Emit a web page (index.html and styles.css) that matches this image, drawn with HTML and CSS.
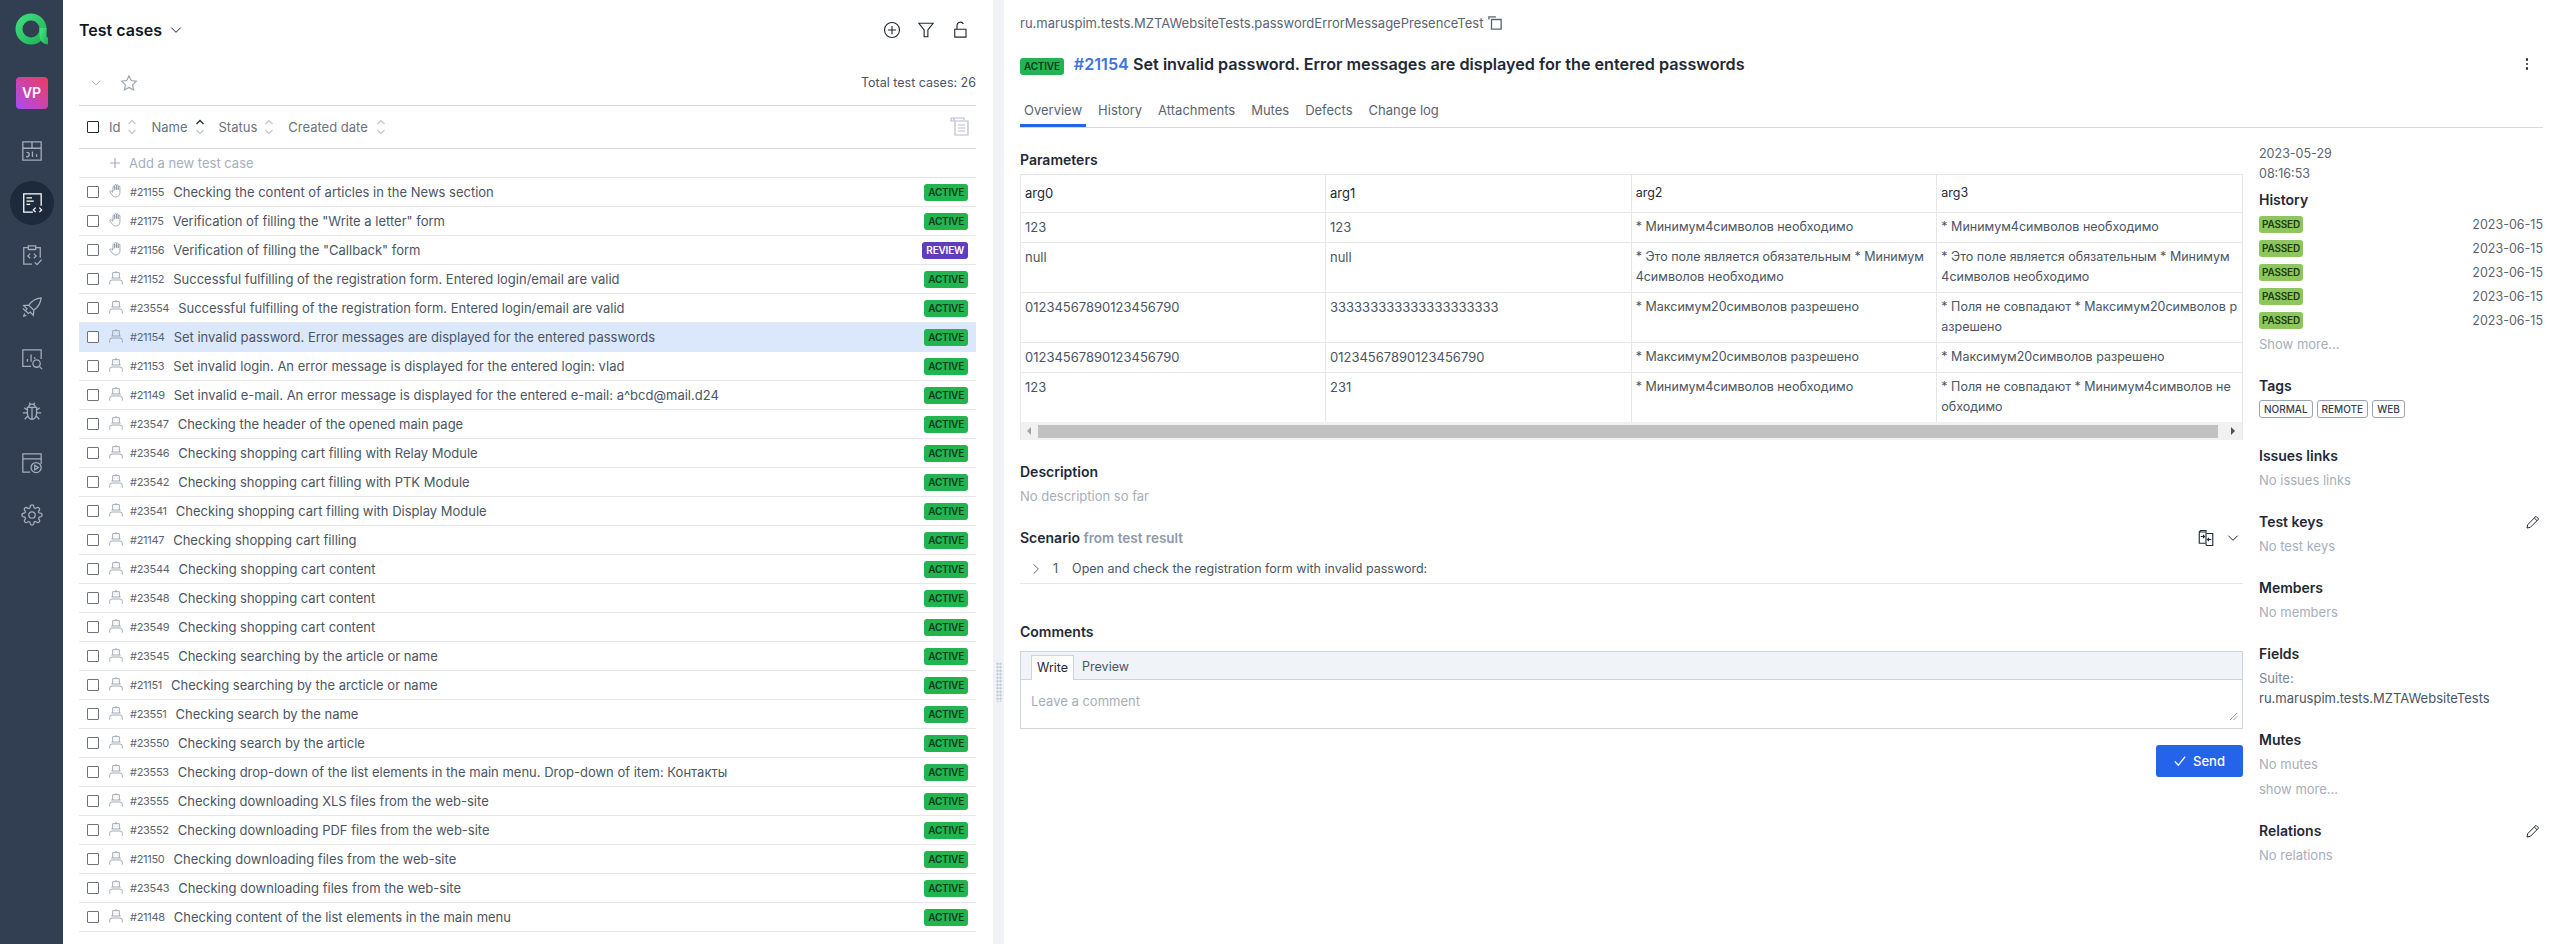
FILE: index.html
```html
<!DOCTYPE html>
<html lang="en">
<head>
  <meta charset="UTF-8" />
  <meta name="viewport" content="width=device-width, initial-scale=1.0"/>
  <title>Test cases</title>
  <link rel="stylesheet" href="styles.css">
</head>
<body>

  <!-- shared icons -->
  <svg class="sprite">
    <symbol id="i-hand" viewBox="0 0 24 24"><path d="M7.5 12V6a1.3 1.3 0 0 1 2.6 0v5M10.1 10V3.6a1.3 1.3 0 0 1 2.6 0V10M12.7 10V4.2a1.3 1.3 0 0 1 2.6 0v6.3M15.3 10.5V6a1.3 1.3 0 0 1 2.6 0v8.5c0 4-2.5 6.5-6 6.5-3 0-4.5-1.2-6-3.5l-3-4c-.8-1.2.8-2.5 2-1.5l2 1.8V11"/></symbol>
    <symbol id="i-robot" viewBox="0 0 24 24"><path d="M12 1.5V4M7 4h10v8H7zM10 8h.6M13.5 8h.6M2.5 22v-3.5A3.5 3.5 0 0 1 6 15h12a3.5 3.5 0 0 1 3.5 3.5V22M7 12H5M17 12h2"/></symbol>
    <symbol id="i-down" viewBox="0 0 24 24"><path d="M5 8.5l7 7 7-7"/></symbol>
    <symbol id="i-sort" viewBox="0 0 12 20"><path d="M2.5 7L6 3.5 9.5 7"/><path d="M2.5 13L6 16.5 9.5 13"/></symbol>
    <symbol id="i-pencil" viewBox="0 0 24 24"><path d="M16.5 3.5l4 4L8 20l-5 1 1-5zM14 6l4 4"/></symbol>
  </svg>

  <!-- Left menu -->
  <nav class="sidebar">
    <svg class="logo" viewBox="0 0 32 32">
      <defs><linearGradient id="logoGreen" x1="0" y1="0" x2="1" y2="1"><stop offset="0" stop-color="#3ddc7c"/><stop offset="1" stop-color="#22b45a"/></linearGradient></defs>
      <circle cx="15" cy="16" r="12" fill="none" stroke="url(#logoGreen)" stroke-width="7"/>
      <path d="M27 15v8c0 3 2 5 5 5" fill="none" stroke="url(#logoGreen)" stroke-width="7"/>
    </svg>
    <div class="project">VP</div>
    <svg class="nav-icon" viewBox="0 0 24 24"><path d="M2 2h20v20H2zM2 9h20M12 2v7M6 13.5c2.5 0 3 .5 3 2s-.5 3-3.5 3M12.5 12.5v6M17 15.5v3"/></svg>
    <div class="nav-active"><svg class="nav-icon" viewBox="0 0 24 24"><path d="M13 22H3V2h19v13M6 6.5h6M6 10h8M6 13.5h4M16 17l-2.5 2.5L16 22M20 17l2.5 2.5L20 22"/></svg></div>
    <svg class="nav-icon" viewBox="0 0 24 24"><path d="M8 4H3v18h9M16 4h5v11M8 2h8v4H8zM10 10.5L7.5 13l2.5 2.5M14 10.5l2.5 2.5-2.5 2.5M15 20l2.5 2.5L22.5 17"/></svg>
    <svg class="nav-icon" viewBox="0 0 24 24"><path d="M22 2c-6 .5-10 3-13.5 8L3 10.5 6.5 14 5 16l3 3 2-1.5 3.5 3.5.5-5.5c5-3.5 7.5-7.5 8-14zM2 13.5l3 3M6 21l-3 1 1-3M9 10.5l4.5 4.500"/></svg>
    <svg class="nav-icon" viewBox="0 0 24 24"><path d="M11 20H2V2h20v10M7 15v-3M11 15V7M15 12v-2"/><circle cx="17" cy="17" r="4"/><path d="M20 20l3 3"/></svg>
    <svg class="nav-icon" viewBox="0 0 24 24"><path d="M7 8h10v7a5 6 0 0 1-10 0zM8.5 8a3.5 3.5 0 0 1 7 0M12 8v13M9 3l1.5 2M15 3l-1.5 2M7 11L3.5 8.5M17 11l3.5-2.5M7 14H2M17 14h5M7.5 17.5L4 21M16.5 17.5L20 21"/></svg>
    <svg class="nav-icon" viewBox="0 0 24 24"><path d="M10 22H2V2h20v11M2 7.5h20"/><circle cx="16.5" cy="17" r="5.5"/><path d="M15 14.5v5l4-2.5z"/></svg>
    <svg class="nav-icon" viewBox="0 0 24 24"><circle cx="12" cy="12" r="3.5"/><path d="M19.4 15a1.65 1.65 0 0 0 .33 1.82l.06.06a2 2 0 0 1 0 2.83 2 2 0 0 1-2.83 0l-.06-.06a1.65 1.65 0 0 0-1.82-.33 1.65 1.65 0 0 0-1 1.51V21a2 2 0 0 1-2 2 2 2 0 0 1-2-2v-.09A1.65 1.65 0 0 0 9 19.4a1.65 1.65 0 0 0-1.82.33l-.06.06a2 2 0 0 1-2.83 0 2 2 0 0 1 0-2.83l.06-.06a1.65 1.65 0 0 0 .33-1.82 1.65 1.65 0 0 0-1.51-1H3a2 2 0 0 1-2-2 2 2 0 0 1 2-2h.09A1.65 1.65 0 0 0 4.6 9a1.65 1.65 0 0 0-.33-1.82l-.06-.06a2 2 0 0 1 0-2.83 2 2 0 0 1 2.83 0l.06.06a1.65 1.65 0 0 0 1.82.33H9a1.65 1.65 0 0 0 1-1.51V3a2 2 0 0 1 2-2 2 2 0 0 1 2 2v.09a1.65 1.65 0 0 0 1 1.51 1.65 1.65 0 0 0 1.82-.33l.06-.06a2 2 0 0 1 2.83 0 2 2 0 0 1 0 2.83l-.06.06a1.65 1.65 0 0 0-.33 1.82V9a1.65 1.65 0 0 0 1.51 1H21a2 2 0 0 1 2 2 2 2 0 0 1-2 2h-.09a1.65 1.65 0 0 0-1.51 1z"/></svg>
  </nav>

  <!-- Test case list -->
  <section class="cases">
    <div class="cases-head">
      <div class="cases-title">Test cases <svg class="ico ico-16"><use href="#i-down"/></svg></div>
      <div class="head-actions">
        <svg class="ico ico-18" viewBox="0 0 24 24"><circle cx="12" cy="12" r="10"/><path d="M12 6.5v11M6.5 12h11"/></svg>
        <svg class="ico ico-18" viewBox="0 0 24 24"><path d="M2.5 3h19l-7 9v9h-5v-9z"/></svg>
        <svg class="ico ico-18" viewBox="0 0 24 24"><path d="M5 11h15v10.5H5zM8 11V6a4.5 4.5 0 0 1 8.5-2"/></svg>
      </div>
    </div>
    <div class="cases-tools">
      <svg class="ico ico-14 muted"><use href="#i-down"/></svg>
      <svg class="ico ico-18 star" viewBox="0 0 24 24"><path d="M12 2.5l3 6.3 6.8.9-5 4.8 1.3 6.8-6.1-3.3-6.100 3.300 1.300-6.800-5-4.800 6.800-.9z"/></svg>
      <span class="total">Total test cases: 26</span>
    </div>
    <div class="cols">
      <span class="check check-dark"></span>
      <span class="col col-id">Id <svg class="sort"><use href="#i-sort"/></svg></span>
      <span class="col">Name <svg class="sort" viewBox="0 0 12 20"><path class="on" d="M2.5 7L6 3.5 9.5 7"/><path d="M2.5 13L6 16.5 9.5 13"/></svg></span>
      <span class="col">Status <svg class="sort"><use href="#i-sort"/></svg></span>
      <span class="col col-date">Created date <svg class="sort"><use href="#i-sort"/></svg></span>
      <svg class="col-config" viewBox="0 0 20 20"><path d="M1 1h13v2M1 1v3h3M4 1v3M5 4h13v14H5zM8 8h7M8 11h7M8 14h7"/></svg>
    </div>
    <div class="add-row"><svg class="add-plus" viewBox="0 0 10 10"><path d="M5 0v10M0 5h10"/></svg><span>Add a new test case</span></div>
    <ul class="rows">
      <li class="row"><span class="check"></span><svg class="ico row-ico"><use href="#i-hand"/></svg><span class="tid">#21155</span><span class="tname">Checking the content of articles in the News section</span><span class="badge active">ACTIVE</span></li>
      <li class="row"><span class="check"></span><svg class="ico row-ico"><use href="#i-hand"/></svg><span class="tid">#21175</span><span class="tname">Verification of filling the "Write a letter" form</span><span class="badge active">ACTIVE</span></li>
      <li class="row"><span class="check"></span><svg class="ico row-ico"><use href="#i-hand"/></svg><span class="tid">#21156</span><span class="tname">Verification of filling the "Callback" form</span><span class="badge review">REVIEW</span></li>
      <li class="row"><span class="check"></span><svg class="ico row-ico"><use href="#i-robot"/></svg><span class="tid">#21152</span><span class="tname">Successful fulfilling of the registration form. Entered login/email are valid</span><span class="badge active">ACTIVE</span></li>
      <li class="row"><span class="check"></span><svg class="ico row-ico"><use href="#i-robot"/></svg><span class="tid">#23554</span><span class="tname">Successful fulfilling of the registration form. Entered login/email are valid</span><span class="badge active">ACTIVE</span></li>
      <li class="row selected"><span class="check"></span><svg class="ico row-ico"><use href="#i-robot"/></svg><span class="tid">#21154</span><span class="tname">Set invalid password. Error messages are displayed for the entered passwords</span><span class="badge active">ACTIVE</span></li>
      <li class="row"><span class="check"></span><svg class="ico row-ico"><use href="#i-robot"/></svg><span class="tid">#21153</span><span class="tname">Set invalid login. An error message is displayed for the entered login: vlad</span><span class="badge active">ACTIVE</span></li>
      <li class="row"><span class="check"></span><svg class="ico row-ico"><use href="#i-robot"/></svg><span class="tid">#21149</span><span class="tname">Set invalid e-mail. An error message is displayed for the entered e-mail: a^bcd@mail.d24</span><span class="badge active">ACTIVE</span></li>
      <li class="row"><span class="check"></span><svg class="ico row-ico"><use href="#i-robot"/></svg><span class="tid">#23547</span><span class="tname">Checking the header of the opened main page</span><span class="badge active">ACTIVE</span></li>
      <li class="row"><span class="check"></span><svg class="ico row-ico"><use href="#i-robot"/></svg><span class="tid">#23546</span><span class="tname">Checking shopping cart filling with Relay Module</span><span class="badge active">ACTIVE</span></li>
      <li class="row"><span class="check"></span><svg class="ico row-ico"><use href="#i-robot"/></svg><span class="tid">#23542</span><span class="tname">Checking shopping cart filling with PTK Module</span><span class="badge active">ACTIVE</span></li>
      <li class="row"><span class="check"></span><svg class="ico row-ico"><use href="#i-robot"/></svg><span class="tid">#23541</span><span class="tname">Checking shopping cart filling with Display Module</span><span class="badge active">ACTIVE</span></li>
      <li class="row"><span class="check"></span><svg class="ico row-ico"><use href="#i-robot"/></svg><span class="tid">#21147</span><span class="tname">Checking shopping cart filling</span><span class="badge active">ACTIVE</span></li>
      <li class="row"><span class="check"></span><svg class="ico row-ico"><use href="#i-robot"/></svg><span class="tid">#23544</span><span class="tname">Checking shopping cart content</span><span class="badge active">ACTIVE</span></li>
      <li class="row"><span class="check"></span><svg class="ico row-ico"><use href="#i-robot"/></svg><span class="tid">#23548</span><span class="tname">Checking shopping cart content</span><span class="badge active">ACTIVE</span></li>
      <li class="row"><span class="check"></span><svg class="ico row-ico"><use href="#i-robot"/></svg><span class="tid">#23549</span><span class="tname">Checking shopping cart content</span><span class="badge active">ACTIVE</span></li>
      <li class="row"><span class="check"></span><svg class="ico row-ico"><use href="#i-robot"/></svg><span class="tid">#23545</span><span class="tname">Checking searching by the article or name</span><span class="badge active">ACTIVE</span></li>
      <li class="row"><span class="check"></span><svg class="ico row-ico"><use href="#i-robot"/></svg><span class="tid">#21151</span><span class="tname">Checking searching by the arcticle or name</span><span class="badge active">ACTIVE</span></li>
      <li class="row"><span class="check"></span><svg class="ico row-ico"><use href="#i-robot"/></svg><span class="tid">#23551</span><span class="tname">Checking search by the name</span><span class="badge active">ACTIVE</span></li>
      <li class="row"><span class="check"></span><svg class="ico row-ico"><use href="#i-robot"/></svg><span class="tid">#23550</span><span class="tname">Checking search by the article</span><span class="badge active">ACTIVE</span></li>
      <li class="row"><span class="check"></span><svg class="ico row-ico"><use href="#i-robot"/></svg><span class="tid">#23553</span><span class="tname">Checking drop-down of the list elements in the main menu. Drop-down of item: Контакты</span><span class="badge active">ACTIVE</span></li>
      <li class="row"><span class="check"></span><svg class="ico row-ico"><use href="#i-robot"/></svg><span class="tid">#23555</span><span class="tname">Checking downloading XLS files from the web-site</span><span class="badge active">ACTIVE</span></li>
      <li class="row"><span class="check"></span><svg class="ico row-ico"><use href="#i-robot"/></svg><span class="tid">#23552</span><span class="tname">Checking downloading PDF files from the web-site</span><span class="badge active">ACTIVE</span></li>
      <li class="row"><span class="check"></span><svg class="ico row-ico"><use href="#i-robot"/></svg><span class="tid">#21150</span><span class="tname">Checking downloading files from the web-site</span><span class="badge active">ACTIVE</span></li>
      <li class="row"><span class="check"></span><svg class="ico row-ico"><use href="#i-robot"/></svg><span class="tid">#23543</span><span class="tname">Checking downloading files from the web-site</span><span class="badge active">ACTIVE</span></li>
      <li class="row"><span class="check"></span><svg class="ico row-ico"><use href="#i-robot"/></svg><span class="tid">#21148</span><span class="tname">Checking content of the list elements in the main menu</span><span class="badge active">ACTIVE</span></li>
    </ul>
  </section>

  <div class="splitter"><div class="grip"></div></div>

  <!-- Test case details -->
  <main class="detail">
    <div class="crumb">ru.maruspim.tests.MZTAWebsiteTests.passwordErrorMessagePresenceTest
      <svg class="ico ico-14" viewBox="0 0 16 16"><path d="M1 4V1h8M4 4h11v11H4z"/></svg>
    </div>
    <div class="title-row">
      <span class="badge active">ACTIVE</span>
      <h1><span class="title-id">#21154</span> Set invalid password. Error messages are displayed for the entered passwords</h1>
      <div class="kebab"><i></i><i></i><i></i></div>
    </div>
    <div class="tabs">
      <span class="tab tab-on">Overview</span>
      <span class="tab">History</span>
      <span class="tab">Attachments</span>
      <span class="tab">Mutes</span>
      <span class="tab">Defects</span>
      <span class="tab">Change log</span>
    </div>

    <div class="columns">
      <div class="main">
        <h3>Parameters</h3>
        <div class="params">
          <table>
            <tr class="param-head"><td>arg0</td><td>arg1</td><td>arg2</td><td>arg3</td></tr>
            <tr><td>123</td><td>123</td><td>* Минимум4символов необходимо</td><td>* Минимум4символов необходимо</td></tr>
            <tr><td>null</td><td>null</td><td>* Это поле является обязательным * Минимум<br>4символов необходимо</td><td>* Это поле является обязательным * Минимум<br>4символов необходимо</td></tr>
            <tr><td>01234567890123456790</td><td>333333333333333333333</td><td>* Максимум20символов разрешено</td><td>* Поля не совпадают * Максимум20символов р<br>азрешено</td></tr>
            <tr><td>01234567890123456790</td><td>01234567890123456790</td><td>* Максимум20символов разрешено</td><td>* Максимум20символов разрешено</td></tr>
            <tr><td>123</td><td>231</td><td>* Минимум4символов необходимо</td><td>* Поля не совпадают * Минимум4символов не<br>обходимо</td></tr>
          </table>
          <div class="scrollbar"><span class="arrow arrow-l"></span><span class="thumb"></span><span class="arrow arrow-r"></span></div>
        </div>

        <h3 class="block">Description</h3>
        <p class="empty">No description so far</p>

        <div class="scenario-head">
          <h3>Scenario <span class="from">from test result</span></h3>
          <svg class="ico ico-18" viewBox="0 0 24 24"><path d="M11 4H3v15h8M3 4l2-2h7v19M13 6h8v16h-8l-1-1M5 10h5M8 8l2 2-2 2M19 14h-5M16 12l-2 2 2 2"/></svg>
          <svg class="ico ico-16"><use href="#i-down"/></svg>
        </div>
        <div class="step">
          <svg class="ico ico-14" viewBox="0 0 24 24"><path d="M8 4l8 8-8 8"/></svg>
          <span class="step-no">1</span>
          <span>Open and check the registration form with invalid password:</span>
        </div>

        <h3 class="comments">Comments</h3>
        <div class="comment-box">
          <div class="comment-tabs"><span class="ctab ctab-on">Write</span><span class="ctab">Preview</span></div>
          <div class="comment-input">Leave a comment<svg class="resize" viewBox="0 0 10 10"><path d="M1 9l8-8M5 9l4-4"/></svg></div>
        </div>
        <div class="send-row">
          <button class="send"><svg class="ico ico-12" viewBox="0 0 14 14"><path d="M1 7.5L5 12l8-10"/></svg>Send</button>
        </div>
      </div>

      <aside class="aside">
        <p class="meta">2023-05-29<br>08:16:53</p>
        <h3 class="history-title">History</h3>
        <div class="history">
          <div class="history-row"><span class="badge passed">PASSED</span><span>2023-06-15</span></div>
          <div class="history-row"><span class="badge passed">PASSED</span><span>2023-06-15</span></div>
          <div class="history-row"><span class="badge passed">PASSED</span><span>2023-06-15</span></div>
          <div class="history-row"><span class="badge passed">PASSED</span><span>2023-06-15</span></div>
          <div class="history-row"><span class="badge passed">PASSED</span><span>2023-06-15</span></div>
        </div>
        <p class="more">Show more...</p>

        <h3 class="block">Tags</h3>
        <div class="tags"><span class="tag">NORMAL</span><span class="tag">REMOTE</span><span class="tag">WEB</span></div>

        <h3 class="issues">Issues links</h3>
        <p class="empty">No issues links</p>

        <div class="side-head"><h3>Test keys</h3><svg class="ico ico-16"><use href="#i-pencil"/></svg></div>
        <p class="empty">No test keys</p>

        <h3 class="block">Members</h3>
        <p class="empty">No members</p>

        <h3 class="block">Fields</h3>
        <p class="fields"><span class="suite">Suite:</span><br>ru.maruspim.tests.MZTAWebsiteTests</p>

        <h3 class="block">Mutes</h3>
        <p class="empty">No mutes</p>
        <p class="more">show more...</p>

        <div class="side-head"><h3>Relations</h3><svg class="ico ico-16"><use href="#i-pencil"/></svg></div>
        <p class="empty">No relations</p>
      </aside>
    </div>
  </main>

</body>
</html>
```

FILE: styles.css
```css
* {
  box-sizing: border-box;
}

body {
  margin: 0;
  height: 100vh;
  display: flex;
  overflow: hidden;
  background: #fff;
  color: #4b5563;
  font-family: Inter, 'Noto Sans', sans-serif;
  font-size: 13px;
  line-height: 20px;
}

.sprite {
  display: none;
}

h1, h3, p, ul {
  margin: 0;
  padding: 0;
}

h3 {
  font-size: 14px;
  font-weight: 600;
  color: #1f2937;
}

.ico {
  fill: none;
  stroke: currentColor;
  stroke-width: 1.5;
  flex: none;
  overflow: visible;
}

.ico-12 { width: 12px; height: 12px; }
.ico-14 { width: 14px; height: 14px; }
.ico-16 { width: 16px; height: 16px; }
.ico-18 { width: 18px; height: 18px; }

.muted {
  color: #9aa3b2;
}

/* sidebar */
.sidebar {
  width: 63px;
  flex: none;
  background: #323f52;
  display: flex;
  flex-direction: column;
  align-items: center;
  padding-top: 13px;
}

.logo {
  width: 32px;
  height: 32px;
  margin-bottom: 32px;
  overflow: visible;
}

.project {
  width: 32px;
  height: 32px;
  border-radius: 4px;
  background: linear-gradient(45deg, #a94df2, #f03a5f);
  color: #fff;
  font-size: 14px;
  font-weight: 600;
  line-height: 32px;
  text-align: center;
  margin-bottom: 31px;
}

.nav-icon {
  width: 22px;
  height: 22px;
  margin-bottom: 30px;
  fill: none;
  stroke: #a3adba;
  stroke-width: 1.4;
  flex: none;
}

.nav-active {
  width: 44px;
  height: 44px;
  border-radius: 50%;
  background: #1c2a3b;
  display: flex;
  align-items: center;
  justify-content: center;
  margin: -11px 0 19px;
  flex: none;
}

.nav-active .nav-icon {
  margin: 0;
  stroke: #fff;
}

/* list */
.cases {
  width: 930px;
  flex: none;
  padding: 0 17px 0 16px;
}

.cases-head {
  height: 60px;
  display: flex;
  align-items: center;
  justify-content: space-between;
  padding-right: 7px;
}

.cases-title {
  display: flex;
  align-items: center;
  gap: 6px;
  font-size: 16px;
  font-weight: 600;
  color: #111827;
}

.head-actions {
  display: flex;
  gap: 16px;
  color: #1f2937;
}

.cases-tools {
  height: 45px;
  display: flex;
  align-items: center;
  padding: 0 0 0 10px;
}

.star {
  margin-left: 17px;
  color: #9aa3b2;
}

.total {
  margin-left: auto;
  font-size: 12.5px;
}

.cols {
  height: 44px;
  display: flex;
  align-items: center;
  border-top: 1px solid #d5d8de;
  border-bottom: 1px solid #d5d8de;
  padding-left: 8px;
}

.check {
  width: 12px;
  height: 12px;
  flex: none;
  border: 1.5px solid #6b7280;
  border-radius: 1px;
  background: #fff;
}

.check-dark {
  border-color: #1f2937;
}

.col {
  display: flex;
  align-items: center;
  gap: 6px;
  margin-right: 13px;
  color: #6b7280;
}

.col-id {
  margin-left: 10px;
}

.col-date {
  gap: 7px;
}

.sort {
  width: 12px;
  height: 20px;
  fill: none;
  stroke: #c3c9d3;
  stroke-width: 1.3;
}

.sort .on {
  stroke: #1f2937;
}

.col-config {
  width: 20px;
  height: 20px;
  margin-left: auto;
  margin-right: 6px;
  fill: none;
  stroke: #b7bfcc;
  stroke-width: 1.2;
}

.add-row {
  height: 29px;
  display: flex;
  align-items: center;
  gap: 9px;
  border-bottom: 1px solid #e5e7eb;
  padding-left: 31px;
  color: #a7aebb;
}

.add-plus {
  width: 10px;
  height: 10px;
  fill: none;
  stroke: #a7aebb;
  stroke-width: 1.2;
}

.rows {
  list-style: none;
}

.row {
  height: 29px;
  display: flex;
  align-items: center;
  border-bottom: 1px solid #e5e7eb;
  padding: 0 8px;
}

.selected {
  background: #dbe8fb;
  border-bottom-color: #dbe8fb;
}

.row-ico {
  width: 16px;
  height: 16px;
  margin: -3px 6px 0 9px;
  color: #8c95a5;
  stroke-width: 1.2;
}

.tid {
  font-size: 11px;
  letter-spacing: -0.3px;
  margin-right: 9px;
  color: #5b6472;
}

.tname {
  color: #4b5563;
  white-space: nowrap;
}

.badge {
  height: 17px;
  flex: none;
  border-radius: 3px;
  padding: 0 4px;
  font-size: 10px;
  font-weight: 600;
  line-height: 17px;
  letter-spacing: -0.2px;
}

.row .badge {
  margin-left: auto;
}

.active {
  background: #22b54f;
  color: #0b3a1c;
}

.review {
  background: #5f3dbd;
  color: #fff;
}

.passed {
  background: #8cc65d;
  color: #1f3a13;
  padding: 0 3px;
}

.splitter {
  width: 11px;
  flex: none;
  background: #eff3f8;
  display: flex;
  align-items: flex-start;
  justify-content: center;
  padding-top: 662px;
}

.grip {
  width: 6px;
  height: 40px;
  background: radial-gradient(#c3c9d3 1px, transparent 1.2px) 0 0 / 3px 3.5px;
}

/* details */
.detail {
  flex: 1;
  min-width: 0;
  padding: 13px 16px 0;
}

.crumb {
  display: flex;
  align-items: center;
  gap: 5px;
  height: 20px;
  color: #5b6472;
}

.title-row {
  display: flex;
  align-items: center;
  height: 20px;
  margin-top: 21px;
}

.title-row .badge {
  margin-top: 4px;
}

.title-row h1 {
  margin-left: 10px;
  font-size: 16.2px;
  font-weight: 600;
  color: #1f2937;
  white-space: nowrap;
}

.title-id {
  color: #3f73dd;
}

.kebab {
  margin-left: auto;
  margin-right: 15px;
  display: flex;
  flex-direction: column;
  gap: 2px;
}

.kebab i {
  width: 2.5px;
  height: 2.5px;
  border-radius: 50%;
  background: #1f2937;
}

.tabs {
  display: flex;
  gap: 8px;
  height: 44px;
  padding-top: 16px;
  margin-top: 10px;
  border-bottom: 1px solid #d5d8de;
}

.tab {
  height: 27px;
  padding: 0 4px;
  color: #5b6472;
}

.tab-on {
  border-bottom: 3px solid #2563eb;
}

.columns {
  display: flex;
  gap: 16px;
}

.main {
  width: 1223px;
  flex: none;
  padding-top: 22px;
}

.params {
  margin-top: 4px;
  border: 1px solid #e5e7eb;
  border-bottom: 0;
}

.params table {
  width: 100%;
  table-layout: fixed;
  border-collapse: separate;
  border-spacing: 0;
}

.params td {
  padding: 4px 4px 5px;
  vertical-align: top;
  border-left: 1px solid #e5e7eb;
  border-top: 1px solid #e5e7eb;
  white-space: nowrap;
  overflow: hidden;
  height: 30px;
  font-size: 12.5px;
}

.params td:nth-child(-n+2) {
  font-size: 13px;
}

.params td:first-child {
  border-left: 0;
  width: 304px;
}

.params tr:first-child td {
  border-top: 0;
  padding: 8px 4px;
  height: 37px;
  color: #1f2937;
}

.scrollbar {
  height: 18px;
  display: flex;
  align-items: center;
  background: #f1f1f1;
}

.thumb {
  flex: 1;
  height: 13px;
  background: #c1c1c1;
}

.arrow {
  width: 17px;
  height: 0;
  flex: none;
  position: relative;
}

.arrow-l::before,
.arrow-r::before {
  content: "";
  position: absolute;
  top: -4px;
  left: 6px;
  border: 4px solid transparent;
}

.arrow-l::before {
  border-right-color: #a3a3a3;
  border-left-width: 0;
}

.arrow-r {
  width: 24px;
}

.arrow-r::before {
  left: 13px;
  border-left-color: #505050;
  border-right-width: 0;
}

.block {
  margin-top: 22px;
}

.empty {
  margin-top: 4px;
  color: #a7aebb;
}

.scenario-head {
  display: flex;
  align-items: center;
  gap: 10px;
  margin-top: 22px;
  height: 20px;
  padding-right: 2px;
  color: #1f2937;
}

.scenario-head h3 {
  margin-right: auto;
}

.from {
  color: #8f98a8;
  font-size: 13.5px;
}

.step {
  height: 30px;
  margin-top: 6px;
  display: flex;
  align-items: center;
  gap: 10px;
  padding-left: 9px;
  border-bottom: 1px solid #e5e7eb;
  color: #4b5563;
  font-size: 12.5px;
}

.step-no {
  margin: 0 4px 0 0;
}

.comments {
  margin-top: 38px;
}

.comment-box {
  margin-top: 9px;
  border: 1px solid #cfd4db;
}

.comment-tabs {
  height: 28px;
  padding: 3px 0 0 10px;
  display: flex;
  background: #f0f3f8;
  border-bottom: 1px solid #cfd4db;
  font-size: 12.5px;
}

.ctab {
  height: 25px;
  padding: 0 6px;
  line-height: 24px;
}

.ctab-on {
  background: #fff;
  border: 1px solid #cfd4db;
  border-bottom: 0;
  margin-right: 2px;
  padding: 0 5px;
  color: #1f2937;
}

.comment-input {
  height: 48px;
  padding: 11px 10px 0;
  display: flex;
  justify-content: space-between;
  color: #a7aebb;
}

.resize {
  width: 9px;
  height: 9px;
  margin-top: 21px;
  margin-right: -6px;
  fill: none;
  stroke: #6b7280;
  stroke-width: 0.8;
}

.send-row {
  display: flex;
  justify-content: flex-end;
  margin-top: 16px;
}

.send {
  width: 87px;
  height: 32px;
  display: flex;
  align-items: center;
  justify-content: center;
  gap: 7px;
  border: none;
  border-radius: 3px;
  background: #2563eb;
  color: #fff;
  font-family: inherit;
  font-size: 13px;
  font-weight: 500;
}

/* right column */
.aside {
  flex: 1;
  min-width: 0;
  padding-top: 16px;
}

.meta,
.history-row {
  font-size: 12.5px;
  color: #5b6472;
}

.history-title {
  margin-top: 6px;
}

.history {
  margin-top: 6px;
  display: flex;
  flex-direction: column;
  gap: 7px;
}

.history-row {
  display: flex;
  align-items: center;
  justify-content: space-between;
  height: 17px;
}

.more {
  margin-top: 5px;
  color: #a7aebb;
}

.tags {
  display: flex;
  gap: 4px;
  margin-top: 4px;
}

.tag {
  height: 18px;
  padding: 0 4px;
  border: 1px solid #9aa3b2;
  border-radius: 3px;
  font-size: 10px;
  font-weight: 500;
  line-height: 16px;
  color: #374151;
}

.issues {
  margin-top: 28px;
}

.side-head {
  display: flex;
  align-items: center;
  justify-content: space-between;
  margin-top: 22px;
  color: #1f2937;
  padding-right: 2px;
}

.fields {
  margin-top: 4px;
  white-space: nowrap;
}

.suite {
  color: #7b8494;
}
```
